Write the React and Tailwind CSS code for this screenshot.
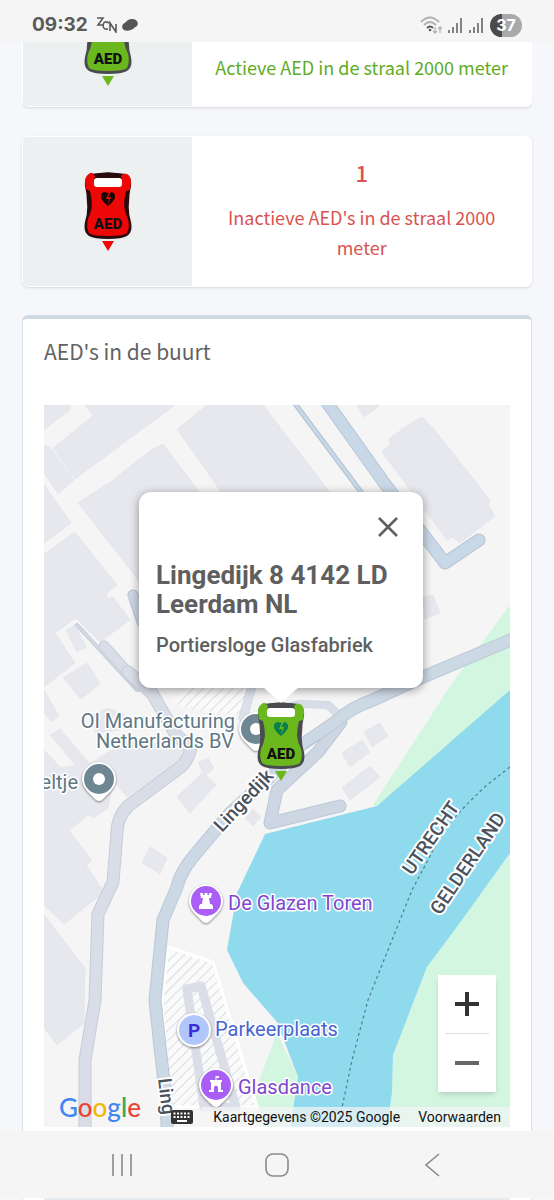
import React from "react";

const buildings = [
  "44,405 70,405 70,410 44,430",
  "85,405 175,405 75,479 53,448 93,416",
  "44,445 50,447 74,480 58,494 44,473",
  "44,485 71,523 44,543",
  "78,503 105,485 108,484 152,449 163,444 250,560 140,582",
  "177,429 207,405 263,405 345,512 235,512",
  "44,554 75,532 117,585 106,594 108,599 113,597 130,620 100,642 76,618 55,633 75,663 44,687",
  "66,630 75,625 86,647 77,652",
  "63,678 87,663 100,684 81,699",
  "44,690 59,716 52,722 44,712",
  "50,735 60,729 88,762 80,770",
  "44,750 61,768 92,762 125,742 160,744 186,748 180,760 127,797 113,780 108,808 93,818 90,814 69,830 92,861 86,865 104,892 64,924 44,905",
  "44,915 85,968 84,1023 57,1045 44,1028",
  "177,797 203,772 216,785 190,813",
  "198,763 208,758 214,768 205,776",
  "150,847 167,858 160,874 142,863",
  "245,818 253,809 261,817 253,826",
  "342,753 362,740 370,752 350,767",
  "364,732 380,723 388,736 372,747",
  "342,788 370,766 380,777 350,800",
  "357,405 380,405 364,417",
  "382,452 390,445 389,439 405,427 422,417 433,428 490,500 488,505 495,516 460,543 453,537 447,540",
  "423,597 433,595 440,613 425,619",
  "90,716 108,708 124,714 120,730 96,733",
];

const roads = [
  { d: "M77 625L137 690", width: 3, color: "#d6dce6", edge: "#bfc8d6" },
  { d: "M104 646L140 686", width: 10, color: "#d8dde7", edge: "#c8cfdb" },
  { d: "M133 595L142 622", width: 10, color: "#cdd6e3", edge: "#b5c2d2" },
  {
    d: "M128 672L152 693L176 735L191 748Q188 762 178 769L128 806Q117 818 117 832L113 882L98 914L95 1000L85 1060V1140",
    width: 12,
    color: "#d9dde7",
    edge: "#c6ccd8",
  },
  { d: "M276 715Q290 703 305 704L328 705L342 718", width: 7, color: "#d8dee8", edge: "#d0d7e2" },
  { d: "M252 686L243 718", width: 8, color: "#dbe0e9", edge: "#d3d9e3" },
  { d: "M290 397L361 492", width: 4, color: "#c9d8e7", edge: "#aebfd1" },
  { d: "M323 397L385 484L445 563L479 540", width: 12, color: "#c9d8e7", edge: "#b8c7d7" },
  { d: "M341 722L318 752L277 790L270 823L340 806", width: 12, color: "#cdd7e4", edge: "#bcc8d6" },
  {
    d: "M520 636L423 677L373 700Q350 708 338 720L300 746L270 777L230 813L193 857Q180 873 177 887L163 920L155 1000L160 1047L165 1090L168 1140",
    width: 12,
    color: "#cdd8e5",
    edge: "#bcc8d6",
  },
];

function AedIcon({ color, heart, edge }) {
  return (
    <svg viewBox="0 0 48 79" className="h-[79px] w-[48px]" aria-hidden="true">
      {/* Case */}
      <path
        d="M6 2Q24 -1 42 2Q48 5 47 14Q45 22 45 31Q44 40 47 50Q49 60 43 64Q38 67 24 67Q10 67 5 64Q-1 60 1 50Q4 40 3 31Q3 22 1 14Q0 5 6 2Z"
        fill={edge}
      />
      <path
        d="M6 1Q8 0 10 3L12 5H36L38 3Q40 1 43 2Q47 4 47 10L46 18L42 19Q40 26 40 34Q41 41 44 47Q46 55 43 61Q40 64 24 64Q8 64 5 61Q2 55 4 47Q7 41 8 34Q8 26 6 19L2 17L1 10Q1 4 6 1Z"
        fill={color}
      />
      {/* Handle */}
      <path d="M12 2Q24 -1 36 2L38 7H10Z" fill={edge} />
      <rect x="10" y="6" width="28" height="9" rx="3" fill="#ffffff" />
      <path d="M24 34Q16 28 17 23Q19 18 24 21Q29 18 31 23Q32 28 24 34Z" fill={heart} />
      <path d="M25 20L22 27H25L24 33L27 25H24L27 20Z" fill={color} />
      <text
        x="24"
        y="57"
        textAnchor="middle"
        className="fill-[#111111] font-[Roboto,sans-serif] text-[15px] font-black"
      >
        AED
      </text>
      <path d="M18 69H30L24 79Z" fill={color} />
    </svg>
  );
}

function CountCard({ icon, count, label, tone }) {
  return (
    <div className="flex rounded-md border border-white bg-white shadow-sm">
      <div className="flex w-1/3 shrink-0 items-center justify-center rounded-l bg-[#ecf0f1]">
        {icon}
      </div>
      <div className={`flex-1 px-5 pt-5 pb-6 text-center ${tone}`}>
        <h3 className="mb-[15px] text-[22px] leading-[30px] font-medium">{count}</h3>
        <p className="text-[18px] leading-[30px]">{label}</p>
      </div>
    </div>
  );
}

function Pin({ x, y, color, children }) {
  return (
    <g transform={`translate(${x} ${y})`}>
      <path
        d="M0 -17A17 17 0 0 1 12 12L3 21Q0 23 -3 21L-12 12A17 17 0 0 1 0 -17Z"
        fill="#ffffff"
        className="drop-shadow-[0_1px_1px_rgba(0,0,0,0.45)]"
      />
      <circle r="15" fill={color} />
      {children}
    </g>
  );
}

function MapDrawing() {
  return (
    <svg
      viewBox="44 405 466 722"
      preserveAspectRatio="xMidYMid slice"
      className="block h-full w-full bg-[#f5f5f6] font-[Roboto,sans-serif]"
    >
      <defs>
        <pattern
          id="hatch"
          width="7"
          height="7"
          patternUnits="userSpaceOnUse"
          patternTransform="rotate(45)"
        >
          <rect width="7" height="7" fill="#fafafb" />
          <rect width="1" height="7" fill="#dadde4" />
        </pattern>
      </defs>

      {/* Buildings */}
      {buildings.map((points) => (
        <polygon
          key={points}
          points={points}
          fill="#e7e8ee"
          stroke="#e0e2e9"
          strokeWidth="0.6"
        />
      ))}

      {/* Water and parks */}
      <path d="M510 605L453 682L373 805L377 807L510 691Z" fill="#d2f6e0" />
      <path
        d="M510 853L462 920L427 967L393 1055L392 1093L387 1127H510Z"
        fill="#d2f6e0"
      />
      <path
        d="M510 690L377 806L265 834L237 893L227 950L243 983L277 1022L298 1077L290 1127H387L392 1093L393 1055L427 967L462 920L510 853Z"
        fill="#90daee"
      />
      <path d="M277 1033L260 1078L256 1097L265 1127H290L298 1077Z" fill="#d2f6e0" />
      <path
        d="M510 767L487 785Q462 808 447 827Q438 840 428 860L412 890L368 1000L352 1060L338 1127"
        fill="none"
        stroke="#4f7e8d"
        strokeWidth="1.200"
        strokeDasharray="3 3"
      />

      {/* Parking areas */}
      <path
        d="M168 947L213 962L257 1107H170L162 1000Z"
        fill="url(#hatch)"
        stroke="#ffffff"
        strokeWidth="3"
      />
      <path d="M173 703L190 686H255L245 715L200 711Z" fill="url(#hatch)" />
      <path
        d="M204 1107L187 989L201 986L236 1107Z"
        fill="none"
        stroke="#dbdee6"
        strokeWidth="9"
        strokeLinejoin="round"
      />

      {/* Roads */}
      {roads.map((road) => (
        <g key={road.d} fill="none" strokeLinecap="round" strokeLinejoin="round">
          <path d={road.d} stroke={road.edge} strokeWidth={road.width + 1} />
          <path d={road.d} stroke={road.color} strokeWidth={road.width - 1} />
        </g>
      ))}
      <path d="M306 748L320 739" stroke="#b6c3d2" strokeWidth="1" />

      {/* Street and region names */}
      <g
        stroke="#ffffff"
        strokeWidth="4"
        strokeLinejoin="round"
        paintOrder="stroke"
        className="fill-[#4a525d] text-[19px] font-medium"
      >
        <text transform="translate(222 833) rotate(-47)">Lingedijk</text>
        <text transform="translate(158 1079) rotate(83)">Ling</text>
        <text transform="translate(412 876) rotate(-55)">UTRECHT</text>
        <text transform="translate(440 916) rotate(-56)">GELDERLAND</text>
      </g>

      {/* Places */}
      <Pin x={256} y={729} color="#6f8793">
        <circle r="6" fill="#ffffff" />
      </Pin>
      <Pin x={99} y={779} color="#6f8793">
        <circle r="6" fill="#ffffff" />
      </Pin>
      <Pin x={206} y={901} color="#a95ff5">
        <path
          d="M-6 -8H-3V-6H-1.500V-8H1.500V-6H3V-8H6L5 -3H3L4 3H5.500L7 5V8H-7V5L-5.500 3H-4L-3 -3H-5Z"
          fill="#ffffff"
        />
      </Pin>
      <circle
        cx="194"
        cy="1030"
        r="17"
        fill="#ffffff"
        className="drop-shadow-[0_1px_1px_rgba(0,0,0,0.45)]"
      />
      <circle cx="194" cy="1030" r="15" fill="#b1c7fb" />
      <text x="194" y="1037" textAnchor="middle" className="fill-[#3a2fd8] text-[19px] font-bold">
        P
      </text>
      <Pin x={216} y={1085} color="#a95ff5">
        <path
          d="M-0.500 -9H3V-7H0.500V-5H6V-3H5V5H7V7H2V2Q0 -0.500 -2 2V7H-7V5H-5V-3H-6V-5H-0.500Z"
          fill="#ffffff"
        />
      </Pin>
      <g
        stroke="#ffffff"
        strokeWidth="3"
        strokeLinejoin="round"
        paintOrder="stroke"
        className="text-[20px]"
      >
        <text x="235" y="728" textAnchor="end" className="fill-[#607784]">
          OI Manufacturing
        </text>
        <text x="234" y="748" textAnchor="end" className="fill-[#607784]">
          Netherlands BV
        </text>
        <text x="78" y="789" textAnchor="end" className="fill-[#607784]">
          eltje
        </text>
        <text x="228" y="910" className="fill-[#8047ce]">
          De Glazen Toren
        </text>
        <text x="215" y="1036" className="fill-[#4665d2]">
          Parkeerplaats
        </text>
        <text x="238" y="1094" className="fill-[#8047ce]">
          Glasdance
        </text>
      </g>
    </svg>
  );
}

function InfoWindow() {
  return (
    <div className="absolute top-[87px] left-[calc(50%-138px)] w-[284px]">
      <div className="relative rounded-xl bg-white px-[17px] pt-4 pb-[31px] font-[Roboto,sans-serif] text-[#5f5f5f] shadow-[0_2px_10px_rgba(0,0,0,0.4)]">
        <div className="flex justify-end pr-1">
          <button type="button" aria-label="Sluiten" className="flex h-[38px] w-[28px] items-center justify-center">
            <svg viewBox="0 0 20 20" className="h-5 w-5" stroke="#5f5f5f" strokeWidth="2.500">
              <path d="M1 1L19 19M19 1L1 19" />
            </svg>
          </button>
        </div>
        <h2 className="mt-[15px] text-[26px] leading-[29px] font-bold">
          Lingedijk 8 4142 LD Leerdam NL
        </h2>
        <p className="mt-[14px] text-[20px] leading-6 font-medium">Portiersloge Glasfabriek</p>
      </div>
      <svg viewBox="0 0 36 16" className="relative mx-auto -mt-px h-4 w-9">
        <path d="M0 0H36L18 16Z" fill="#ffffff" />
      </svg>
      <div className="mx-auto -mt-px flex w-[48px]">
        <AedIcon color="#6ab81e" heart="#0a7f4b" edge="#4a4b4f" />
      </div>
    </div>
  );
}

function ZoomControls() {
  return (
    <div className="absolute right-[14px] bottom-[35px] flex w-[58px] flex-col items-center bg-white shadow-md">
      <button type="button" aria-label="Inzoomen" className="flex h-[58px] w-full items-center justify-center">
        <svg viewBox="0 0 24 24" className="h-6 w-6" stroke="#333333" strokeWidth="4">
          <path d="M0 12H24M12 0V24" />
        </svg>
      </button>
      <div className="h-px w-11 bg-[#e0e0e0]" />
      <button type="button" aria-label="Uitzoomen" className="flex h-[58px] w-full items-center justify-center">
        <svg viewBox="0 0 24 24" className="h-6 w-6" stroke="#666666" strokeWidth="4">
          <path d="M0 12H24" />
        </svg>
      </button>
    </div>
  );
}

function MapFooter() {
  return (
    <div className="absolute inset-x-0 bottom-0 flex items-end pl-[15px] font-[Roboto,sans-serif]">
      <a
        href="#google"
        className="pb-1 font-[Lato,sans-serif] text-[26px] leading-8 font-medium"
      >
        <span className="text-[#4285f4]">G</span>
        <span className="text-[#ea4335]">o</span>
        <span className="text-[#f4b400]">o</span>
        <span className="text-[#4285f4]">g</span>
        <span className="text-[#34a853]">l</span>
        <span className="text-[#ea4335]">e</span>
      </a>
      <div className="ml-auto flex h-5 items-center text-[14px] text-[#111111]">
        <button type="button" aria-label="Sneltoetsen" className="pr-2">
          <svg viewBox="0 0 22 14" className="h-[14px] w-[22px]">
            <rect width="22" height="14" rx="2" fill="#333333" />
            <path
              d="M2.500 3.500H20M2.500 7H20"
              stroke="#ffffff"
              strokeWidth="2"
              strokeDasharray="2 1.500"
            />
            <path d="M6 11H16" stroke="#ffffff" strokeWidth="2" />
          </svg>
        </button>
        <span className="bg-[#f5f5f5]/70 pr-[9px] pl-3">Kaartgegevens ©2025 Google</span>
        <a href="#voorwaarden" className="bg-[#f5f5f5]/70 px-[9px]">
          Voorwaarden
        </a>
      </div>
    </div>
  );
}

function Signal() {
  return (
    <svg viewBox="0 0 15 16" className="h-4 w-[15px]" stroke="#666666" strokeWidth="1.600">
      <path d="M1 16V13M5 16V10M9 16V6M13 16V1" />
    </svg>
  );
}

function StatusBar() {
  return (
    <header className="flex h-[42px] items-center bg-[#f5f5f5] px-8 pt-2 text-[#5a5a5a]">
      <span className="font-[Inter,sans-serif] text-[19px] font-bold">09:32</span>
      <svg viewBox="0 0 22 16" className="ml-2 h-4 w-[22px]" fill="none" stroke="#5a5a5a" strokeWidth="1.600">
        <path d="M1 1H7L2 8H8M13 6Q8 3 7 8Q7 13 12 12M14 14V6L20 15V7" />
      </svg>
      <svg viewBox="0 0 16 12" className="ml-1 h-3 w-4">
        <path
          d="M6 1Q10 -1 14 1Q17 4 15 7Q13 8 11 10Q6 13 2 11Q-1 9 1 5Q3 4 6 1Z"
          fill="#555555"
        />
      </svg>
      <div className="ml-auto flex items-center gap-[6px]">
        <svg viewBox="0 0 22 18" className="h-[18px] w-[22px]" fill="none" strokeWidth="1.800">
          <path d="M1 6Q10 -3 19 6M4 9Q10 3 16 9" stroke="#b0b0b0" />
          <path d="M7 12Q10 9 13 12" stroke="#555555" />
          <circle cx="10" cy="14" r="1.300" fill="#555555" />
          <path
            d="M15 11V17L13 15M15 17L17 15M20 17V11L18 13M20 11L22 13"
            stroke="#b0b0b0"
            strokeWidth="1.200"
          />
        </svg>
        <Signal />
        <Signal />
        <span className="flex h-[23px] w-[32px] items-center justify-center rounded-full bg-linear-to-r from-[#4a4a4a] from-37% to-[#a9a9a9] to-37% font-[Inter,sans-serif] text-[16px] font-bold text-white">
          37
        </span>
      </div>
    </header>
  );
}

function NavBar() {
  return (
    <nav className="flex h-[67px] items-center justify-center gap-[99px] bg-[#f5f5f5]">
      <button type="button" aria-label="Recente apps" className="flex w-14 justify-center">
        <svg viewBox="0 0 22 24" className="h-6 w-[22px]" stroke="#8a8a8a" strokeWidth="1.600">
          <path d="M2 1V23M11 1V23M20 1V23" />
        </svg>
      </button>
      <button type="button" aria-label="Startscherm" className="flex w-14 justify-center">
        <svg viewBox="0 0 24 24" className="h-6 w-6" fill="none" stroke="#8a8a8a" strokeWidth="1.600">
          <rect x="1" y="1" width="22" height="22" rx="7" />
        </svg>
      </button>
      <button type="button" aria-label="Terug" className="flex w-14 justify-center">
        <svg viewBox="0 0 16 24" className="h-6 w-4" fill="none" stroke="#8a8a8a" strokeWidth="1.600">
          <path d="M15 1L2 12L15 23" />
        </svg>
      </button>
    </nav>
  );
}

function App() {
  return (
    <div className="flex min-h-screen flex-col bg-[#f5f7fb] font-['Noto_Sans_CJK_SC',sans-serif]">
      <StatusBar />
      <main className="flex flex-1 flex-col px-[22px]">
        {/* First card is scrolled partly under the status bar */}
        <div className="flex h-[69px] flex-col justify-end overflow-hidden pb-1">
          <CountCard
            icon={<AedIcon color="#6ab81e" heart="#0a7f4b" edge="#4a4b4f" />}
            count="9"
            label="Actieve AED in de straal 2000 meter"
            tone="text-[#5eab1f]"
          />
        </div>
        <div className="mt-[25px]">
          <CountCard
            icon={<AedIcon color="#ee0707" heart="#1a0505" edge="#2c0b0d" />}
            count="1"
            label="Inactieve AED's in de straal 2000 meter"
            tone="text-[#d9534f]"
          />
        </div>
        <section className="mt-7 flex-1 rounded-t-md border border-t-4 border-b-0 border-[#d9e0e8] border-t-[#cfdae4] bg-white px-[21px] pb-1">
          <h2 className="pt-4 text-[21px] leading-8 text-[#636363]">AED's in de buurt</h2>
          <div className="relative mt-[38px] h-[722px] overflow-hidden">
            <MapDrawing />
            <InfoWindow />
            <ZoomControls />
            <MapFooter />
          </div>
        </section>
      </main>
      <NavBar />
      <div className="h-[2px] px-[22px]">
        <div className="h-full border-x border-[#d9e0e8] bg-white px-[21px]">
          <div className="h-full bg-[#e6ecf0]" />
        </div>
      </div>
    </div>
  );
}

export default App;
